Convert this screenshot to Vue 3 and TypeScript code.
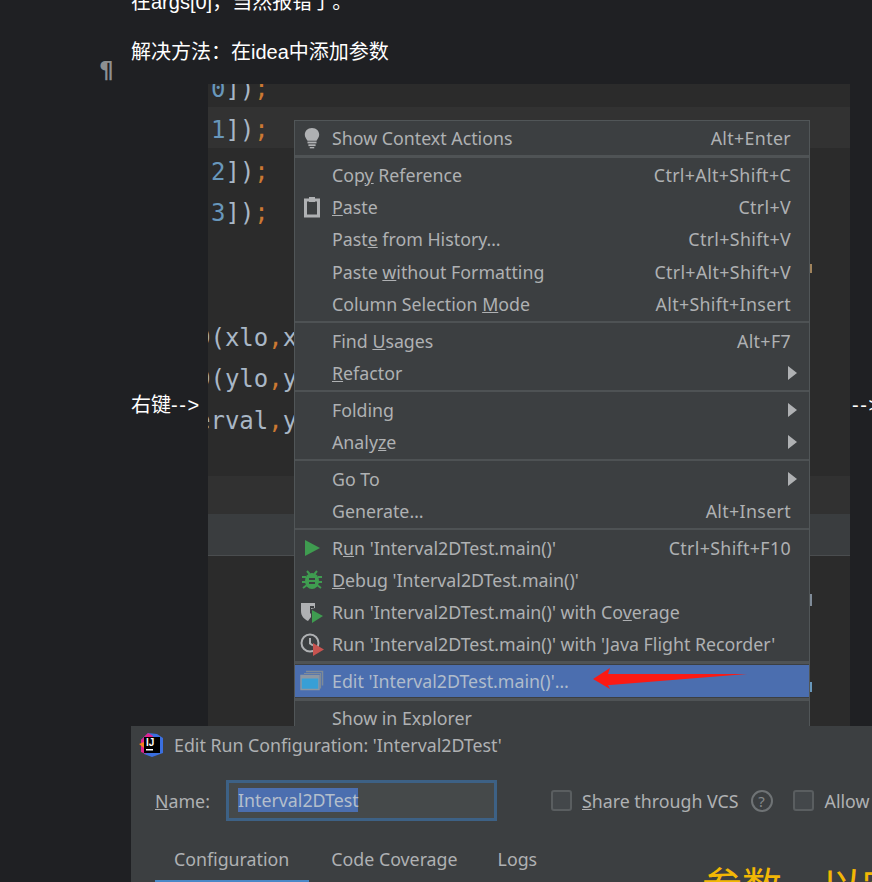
<script setup lang="ts">
interface Item { label: string; u?: number; key?: string; arrow?: boolean; icon?: string; active?: boolean }
const groups: Item[][] = [
  [{ label: 'Show Context Actions', key: 'Alt+Enter', icon: 'bulb' }],
  [
    { label: 'Copy Reference', u: 3, key: 'Ctrl+Alt+Shift+C' },
    { label: 'Paste', u: 0, key: 'Ctrl+V', icon: 'clip' },
    { label: 'Paste from History…', u: 4, key: 'Ctrl+Shift+V' },
    { label: 'Paste without Formatting', u: 6, key: 'Ctrl+Alt+Shift+V' },
    { label: 'Column Selection Mode', u: 17, key: 'Alt+Shift+Insert' },
  ],
  [
    { label: 'Find Usages', u: 5, key: 'Alt+F7' },
    { label: 'Refactor', u: 0, arrow: true },
  ],
  [
    { label: 'Folding', arrow: true },
    { label: 'Analyze', u: 5, arrow: true },
  ],
  [
    { label: 'Go To', arrow: true },
    { label: 'Generate…', key: 'Alt+Insert' },
  ],
  [
    { label: "Run 'Interval2DTest.main()'", u: 1, key: 'Ctrl+Shift+F10', icon: 'run' },
    { label: "Debug 'Interval2DTest.main()'", u: 0, icon: 'debug' },
    { label: "Run 'Interval2DTest.main()' with Coverage", u: 35, icon: 'cover' },
    { label: "Run 'Interval2DTest.main()' with 'Java Flight Recorder'", icon: 'jfr' },
  ],
  [{ label: "Edit 'Interval2DTest.main()'…", icon: 'edit', active: true }],
  [{ label: 'Show in Explorer' }],
]
function parts(i: Item): [string, string, string] {
  if (i.u === undefined) return [i.label, '', '']
  return [i.label.slice(0, i.u), i.label.charAt(i.u), i.label.slice(i.u + 1)]
}
const code = ['0', '1', '2', '3']
</script>

<template>
  <div class="page">
    <p class="para first">在args[0]，当然报错了。</p>
    <p class="para second">解决方法：在idea中添加参数</p>
    <span class="pilcrow">¶</span>
    <div class="shot-row">
      <span class="inline-text left">右键<span class="dashes">--&gt;</span></span>
      <div class="editor">
        <div class="current-band"></div>
        <div class="band-a"></div>
        <div class="band-b"></div>
        <div class="code">
          <div v-for="n in code" :key="n" class="line">
            <span class="num">{{ n }}</span><span class="id">]</span><span class="par">)</span><span class="semi">;</span>
          </div>
          <div class="line"></div>
          <div class="line"></div>
          <div class="line shift"><span class="id">D(xlo</span><span class="semi">,</span><span class="id">x</span></div>
          <div class="line shift"><span class="id">D(ylo</span><span class="semi">,</span><span class="id">y</span></div>
          <div class="line shift"><span class="id">erval</span><span class="semi">,</span><span class="id">y</span></div>
        </div>
        <i class="bit bit-a"></i>
        <i class="bit bit-b"></i>
        <i class="bit bit-c"></i>

        <div class="menu">
          <template v-for="(g, gi) in groups" :key="gi">
            <div v-if="gi > 0" class="sep" :class="{ thick: gi === 1 || gi >= 6 }"></div>
            <div v-for="it in g" :key="it.label" class="item" :class="{ active: it.active }">
              <span class="ico">
                <svg v-if="it.icon === 'bulb'" width="18" height="22" viewBox="0 0 20 24">
                  <path d="M10 1C5 1 2 4.500 2 8.500c0 3 2 4.800 3 6.500h10c1-1.700 3-3.500 3-6.500C18 4.500 15 1 10 1z" fill="#afb1b3" />
                  <rect x="5" y="16" width="10" height="2" fill="#afb1b3" />
                  <rect x="6" y="19" width="8" height="2" fill="#afb1b3" />
                  <rect x="7.500" y="22" width="5" height="1.500" fill="#afb1b3" />
                </svg>
                <svg v-else-if="it.icon === 'clip'" width="18" height="22" viewBox="0 0 18 22">
                  <rect x="2.500" y="4" width="13" height="16" fill="none" stroke="#afb1b3" stroke-width="3" />
                  <rect x="6" y="1" width="6" height="5" fill="#afb1b3" />
                </svg>
                <svg v-else-if="it.icon === 'run'" width="18" height="18" viewBox="0 0 18 18">
                  <path d="M2 1l15 8-15 8z" fill="#3f9c50" />
                </svg>
                <svg v-else-if="it.icon === 'debug'" width="22" height="22" viewBox="0 0 22 22">
                  <path d="M6 2l2.500 3M16 2l-2.500 3M1 8h4M17 8h4M1 13h4M17 13h4M2 19l4-3M20 19l-4-3" stroke="#3f9c50" stroke-width="2" fill="none" />
                  <ellipse cx="11" cy="12" rx="7" ry="8" fill="#3f9c50" />
                  <path d="M8 10h6M8 14h6" stroke="#3c3f41" stroke-width="2" />
                </svg>
                <svg v-else-if="it.icon === 'cover'" width="24" height="24" viewBox="0 0 24 24">
                  <path d="M1 3h14v5l-4 1v8l-3 4c-4-2-7-5-7-10z" fill="#afb1b3" />
                  <path d="M10 6h4v2h-3v5l-1 1z" fill="#3c3f41" />
                  <path d="M12 10l11 6-11 7z" fill="#3f9c50" />
                </svg>
                <svg v-else-if="it.icon === 'jfr'" width="24" height="24" viewBox="0 0 24 24">
                  <circle cx="10" cy="11" r="8.500" fill="none" stroke="#afb1b3" stroke-width="2" />
                  <path d="M10 6v5.500l3 2" fill="none" stroke="#afb1b3" stroke-width="2" />
                  <path d="M13 11l11 6.500-11 6.500z" fill="#c75450" />
                </svg>
                <svg v-else-if="it.icon === 'edit'" width="24" height="22" viewBox="0 0 24 22">
                  <path d="M6 1.500h16.500v14" fill="none" stroke="#7f8b98" stroke-width="1.500" />
                  <path d="M4 3.500h16.500v15" fill="none" stroke="#7f8b98" stroke-width="1.200" />
                  <rect x="1" y="5.500" width="18" height="14" fill="#389fd6" stroke="#8c97a3" stroke-width="1.500" />
                  <rect x="1" y="5.500" width="18" height="3" fill="#8c97a3" />
                </svg>
              </span>
              <span class="label">{{ parts(it)[0] }}<u>{{ parts(it)[1] }}</u>{{ parts(it)[2] }}</span>
              <span v-if="it.key" class="key">{{ it.key }}</span>
              <svg v-if="it.arrow" class="sub" width="9" height="14" viewBox="0 0 9 14"><path d="M0 0l9 7-9 7z" fill="#afb1b3" /></svg>
            </div>
          </template>
          <svg class="red-arrow" width="160" height="24" viewBox="0 0 160 24">
            <path d="M3 13L20 2l-2 6 139 0-137 11-2 0 2 4z" fill="#fb1a14" />
          </svg>
        </div>
      </div>
      <span class="inline-text right"><span class="dashes">--&gt;</span></span>
    </div>

    <section class="dialog">
      <header class="title">
        <svg class="logo" width="26" height="26" viewBox="0 0 26 26">
          <path d="M9 1L2 8l3 14 8 3 11-4V6l-6-4z" fill="#3a6fe0" />
          <path d="M2 8l7-7 5 3-7 18-5-2z" fill="#e0218a" />
          <path d="M0 12l5-2v6z" fill="#f58220" />
          <rect x="5" y="5" width="16" height="16" fill="#000" />
          <rect x="7" y="17" width="7" height="1.500" fill="#fff" />
          <text x="7" y="14" class="logo-text">IJ</text>
        </svg>
        <span>Edit Run Configuration: 'Interval2DTest'</span>
      </header>
      <div class="name-row">
        <span class="name-label"><u>N</u>ame:</span>
        <div class="input"><span class="selected">Interval2DTest</span></div>
        <span class="check"></span>
        <span class="check-label"><u>S</u>hare through VCS</span>
        <span class="help">?</span>
        <span class="check second-check"></span>
        <span class="check-label">Allow parallel run</span>
      </div>
      <nav class="tabs">
        <span class="tab active">Configuration</span>
        <span class="tab">Code Coverage</span>
        <span class="tab">Logs</span>
        <span class="note">参数，以空格分隔</span>
      </nav>
    </section>
  </div>
</template>

<style>
html, body { margin: 0; background: #1f2023; }
</style>

<style scoped>
.page {
  position: relative;
  width: 872px;
  height: 882px;
  overflow: hidden;
  background: #1f2023;
  font-family: "Noto Sans", "Noto Sans CJK SC", sans-serif;
  display: flex;
  flex-direction: column;
}
.para {
  margin: 0 0 0 131px;
  color: #fff;
  font-size: 20px;
  line-height: 27px;
  font-family: "Liberation Sans", "Noto Sans CJK SC", sans-serif;
  white-space: nowrap;
}
.first { margin-top: -11px; }
.second { margin-top: 23px; height: 45px; }
.pilcrow {
  position: absolute;
  left: 99px;
  top: 56px;
  color: #8d9092;
  font: bold 23px/28px "DejaVu Sans", sans-serif;
}
.shot-row {
  display: flex;
  align-items: center;
  height: 642px;
  flex: none;
}
.inline-text {
  color: #fff;
  font: 20px/27px "Liberation Sans", "Noto Sans CJK SC", sans-serif;
  white-space: nowrap;
}
.dashes { letter-spacing: 1.6px; }
.left { width: 77px; margin-left: 131px; flex: none; }
.right { margin-left: 2px; }
.editor {
  position: relative;
  flex: none;
  width: 642px;
  height: 642px;
  background: #2b2b2b;
  overflow: hidden;
}
.code {
  position: relative;
  font: 24px/41.450px "DejaVu Sans Mono", monospace;
  white-space: pre;
  margin-top: -15px;
}
.line { height: 41.450px; padding-left: 3px; color: #a9b7c6; }
.line.shift { margin-left: -15px; }
.num { color: #6897bb; }
.par { color: #a9b7c6; }
.semi { color: #cc7832; }
.current-band { position: absolute; left: 0; right: 0; top: 23px; height: 41px; background: #323232; }
.band-a { position: absolute; left: 0; right: 0; top: 392px; height: 38px; background: #313131; }
.band-b { position: absolute; left: 0; right: 0; top: 430px; height: 41px; background: #3a3d3f; border-bottom: 1px solid #4a4d4f; }
.bit { position: absolute; left: 602px; width: 2px; }
.bit-a { top: 180px; height: 9px; background: #a0835c; }
.bit-b { top: 510px; height: 12px; background: #7f8b98; }
.bit-c { top: 598px; height: 10px; background: #6897bb; }
.menu {
  position: absolute;
  left: 86px;
  top: 36px;
  width: 516px;
  height: 606px;
  padding-top: 1px;
  box-sizing: border-box;
  background: #3c3f41;
  border: 1px solid #515658;
  border-bottom: none;
  overflow: hidden;
  color: #afb1b3;
  font-size: 17.800px;
}
.item {
  height: 32.300px;
  display: flex;
  align-items: center;
  padding-right: 18px;
  white-space: nowrap;
}
.item.active { background: #4b6eaf; color: #b0bccb; }
.ico {
  width: 37px;
  flex: none;
  display: flex;
  justify-content: center;
  padding-right: 4px;
  box-sizing: border-box;
}
.label { flex: 1; }
.key { flex: none; letter-spacing: 0.350px; }
.sub { flex: none; margin-right: -6px; }
.sep { height: 2px; margin: 1.200px 0; background: #4e5254; }
.sep.thick { height: 3px; margin: 0.700px 0; background: #4f5355; }
.red-arrow { position: absolute; left: 295px; top: 545px; }
.dialog {
  flex: none;
  margin-left: 131px;
  height: 156px;
  background: #3c3f41;
  color: #afb1b3;
  font-size: 17.800px;
  overflow: hidden;
}
.title {
  height: 38px;
  display: flex;
  align-items: center;
  gap: 9px;
  padding-left: 8px;
}
.logo-text { font: bold 10px "Liberation Sans", sans-serif; fill: #fff; }
.name-row {
  display: flex;
  align-items: center;
  height: 41px;
  margin-top: 16px;
  padding-left: 24px;
  white-space: nowrap;
}
.name-label { width: 71px; flex: none; }
.input {
  width: 271px;
  height: 41px;
  box-sizing: border-box;
  border: 3px solid #3d6185;
  background: #45494a;
  padding: 5px 0 0 9px;
  flex: none;
}
.selected {
  display: inline-block;
  background: #4b6eaf;
  height: 24px;
  line-height: 24px;
  color: #b4bfcc;
  width: 120px;
}
.check {
  width: 21px;
  height: 21px;
  box-sizing: border-box;
  border: 2px solid #5a5e60;
  border-radius: 3px;
  background: #43474a;
  margin-left: 54px;
  margin-right: 10px;
  flex: none;
}
.second-check { margin-left: 20px; margin-right: 11px; }
.help {
  width: 22px;
  height: 22px;
  box-sizing: border-box;
  border: 2px solid #6f7375;
  border-radius: 50%;
  color: #868a8c;
  font-size: 15px;
  line-height: 18px;
  text-align: center;
  margin-left: 12px;
  flex: none;
}
.tabs {
  position: relative;
  display: flex;
  margin-top: 21px;
  margin-left: 24px;
  height: 41px;
}
.tab { padding: 5px 20px 0 20px; box-sizing: border-box; height: 41px; white-space: nowrap; }
.tab.active { padding-left: 19px; border-bottom: 3px solid #4a88c7; }
.tab:nth-child(2) { margin-left: 2px; }
.note {
  position: absolute;
  left: 547px;
  top: 20px;
  color: #f2b705;
  font-size: 40px;
  line-height: 44px;
  white-space: nowrap;
  font-family: "Noto Sans CJK SC", sans-serif;
}
</style>
